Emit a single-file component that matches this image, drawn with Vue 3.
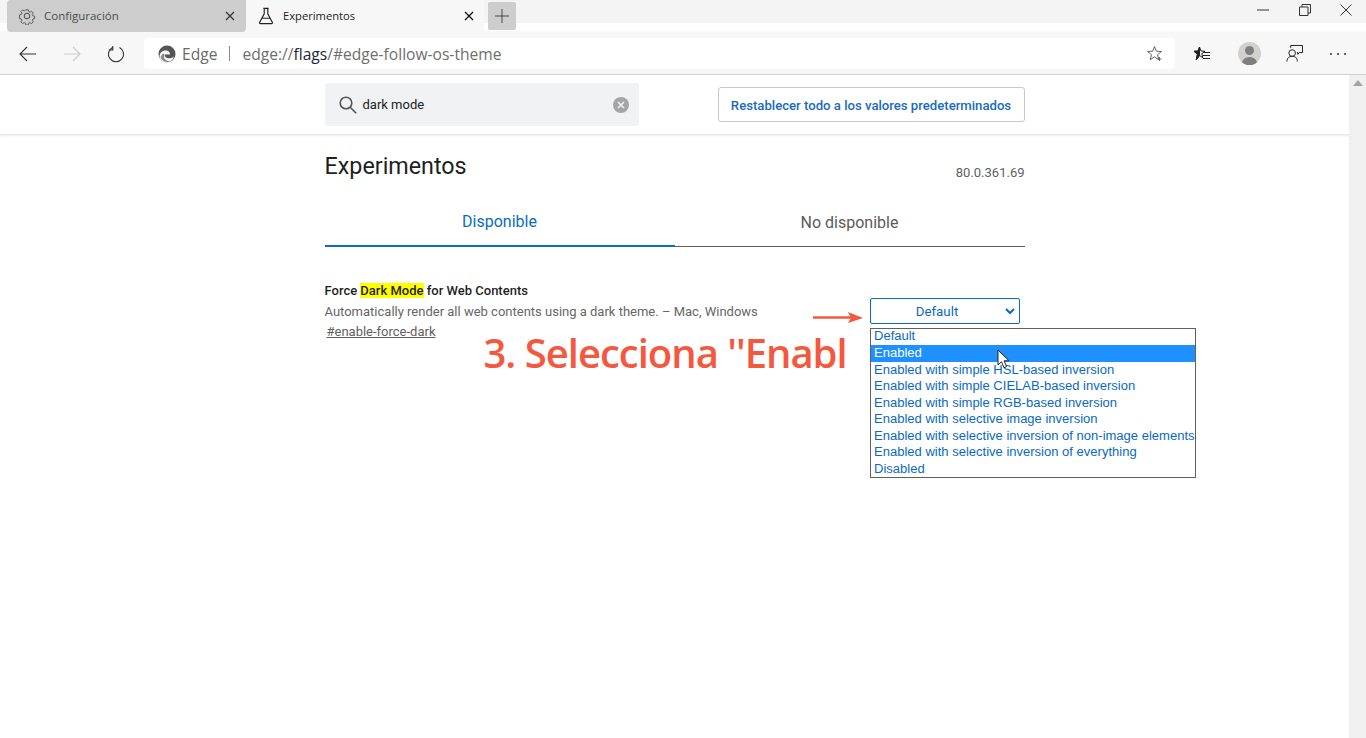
<script setup>
const options = [
  'Default',
  'Enabled',
  'Enabled with simple HSL-based inversion',
  'Enabled with simple CIELAB-based inversion',
  'Enabled with simple RGB-based inversion',
  'Enabled with selective image inversion',
  'Enabled with selective inversion of non-image elements',
  'Enabled with selective inversion of everything',
  'Disabled'
]
</script>

<template>
  <div class="window">
    <div class="tabstrip">
      <div class="tab inactive">
        <svg class="tab-icon" width="18" height="18" viewBox="0 0 18 18" fill="none" stroke="#4a4a4a" stroke-width="1">
          <circle cx="9" cy="9" r="2.8" />
          <path d="M7.6 1.5h2.8l.5 2.2 1.5.7 2-1.1 2 2-1.2 1.9.7 1.5 2.1.5v2.8l-2.1.5-.7 1.5 1.2 1.9-2 2-2-1.1-1.5.7-.5 2.2H7.6l-.5-2.2-1.5-.7-2 1.1-2-2 1.2-1.9-.7-1.5-2.1-.5V7.600l2.100-.5.7-1.500-1.200-1.900 2-2 2 1.100 1.500-.7z" transform="translate(1.500 1.500) scale(.84)" />
        </svg>
        <span class="tab-title">Configuración</span>
        <svg class="tab-close" width="10" height="10" viewBox="0 0 10 10" stroke="#333" stroke-width="1.200"><path d="M1 1l8 8M9 1l-8 8" /></svg>
      </div>
      <div class="tab active">
        <svg class="tab-icon" width="16" height="18" viewBox="0 0 18 20" fill="none" stroke="#222" stroke-width="1.300">
          <path d="M6 1.500h6M7 1.500v6L1.800 17.200q-.4 1.300 1 1.300h12.400q1.400 0 1-1.300L11 7.500v-6M4.500 12.500h9" />
        </svg>
        <span class="tab-title">Experimentos</span>
        <svg class="tab-close" width="10" height="10" viewBox="0 0 10 10" stroke="#111" stroke-width="1.400"><path d="M1 1l8 8M9 1l-8 8" /></svg>
      </div>
      <div class="new-tab">
        <svg width="14" height="14" viewBox="0 0 14 14" stroke="#444" stroke-width="1"><path d="M7 0v14M0 7h14" /></svg>
      </div>
      <div class="win-controls">
        <svg width="12" height="2" viewBox="0 0 12 2" stroke="#333"><path d="M0 1h12" /></svg>
        <svg width="12" height="12" viewBox="0 0 12 12" fill="none" stroke="#333"><path d="M.5 3h8.500v8.500H.5zM3 3V.5h8.500V9H9" /></svg>
        <svg width="12" height="12" viewBox="0 0 12 12" stroke="#333"><path d="M.5.5l11 11M11.500.5l-11 11" /></svg>
      </div>
    </div>

    <div class="toolbar">
      <svg class="nav back" width="18" height="16" viewBox="0 0 18 16" fill="none" stroke="#333" stroke-width="1.100"><path d="M17 8H1M8 1L1 8l7 7" /></svg>
      <svg class="nav fwd" width="18" height="16" viewBox="0 0 18 16" fill="none" stroke="#ccc" stroke-width="1.100"><path d="M1 8h16M10 1l7 7-7 7" /></svg>
      <svg class="nav reload" width="18" height="18" viewBox="0 0 18 18" fill="none" stroke="#333" stroke-width="1.100"><path d="M5.500 2.400A7.600 7.600 0 1 0 12.500 2.400M5.800 1v4H1.800" /></svg>
      <div class="omnibox">
        <svg class="edge-logo" width="18" height="18" viewBox="0 0 18 18">
          <circle cx="9" cy="9" r="8.500" fill="#555" />
          <path d="M1.500 11C2 6.500 6 5 8.500 5.500 11 6 12 7.500 12 9.500H6.500C6.500 12 9 14 13 13c1.200-.3 2-.8 3-1.500-1 3.500-4 6-7.500 6C5.500 17.500 1.500 15 1.500 11z" fill="#f7f7f7" />
          <path d="M6 11.500c0 3 3 5 6.500 4.500-3 2-8.500 1-10-4 1-2.500 2.500-3.500 3.500-3.500z" fill="#8a8a8a" />
        </svg>
        <span class="site">Edge</span>
        <span class="sep"></span>
        <span class="url">edge://<b>flags</b>/#edge-follow-os-theme</span>
        <svg class="star" width="17" height="17" viewBox="0 0 17 17" fill="none" stroke="#666"><path d="M7.500 1.500l1.800 4.700 5.200.3-4 3.200 1.300 5-4.300-2.800-4.300 2.800 1.300-5-4-3.200 5.200-.3z" /><path d="M12.500 12v4M10.500 14h4" /></svg>
      </div>
      <div class="tools">
        <svg width="18" height="16" viewBox="0 0 18 16" fill="none" stroke="#222" stroke-width="1"><path d="M6.500 1v8.500l-3.300 4.500 1.200-5.800L1 5.300l4-.2z" fill="#222" /><path d="M6.500 1l1.500 4 4 .2-3.200 2.500 1 4-3.300-2.200L3.200 14l1.200-5.800L1 5.300l4-.2z" /><path d="M10 6.500h7M10 9.500h7M10 12.500h7" /></svg>
        <div class="avatar"><i class="av-head"></i><i class="av-body"></i></div>
        <svg class="feedback" width="17" height="19" viewBox="0 0 18 20" fill="none" stroke="#222" stroke-width="1.050"><path d="M5 4V1.500h12.500V9H14l-1.500 2V9h-1" /><circle cx="6.500" cy="9.500" r="3.500" /><path d="M1 18.500c0-4 2.500-5.500 5.500-5.500s5.500 1.500 5.500 5.500" /></svg>
        <div class="dots"><i></i><i></i><i></i></div>
      </div>
    </div>

    <div class="page">
      <div class="content">
        <header class="flags-header">
          <div class="column header-row">
            <div class="search">
              <svg width="20" height="20" viewBox="0 0 20 20" fill="none" stroke="#555" stroke-width="1.600"><circle cx="8" cy="8" r="5.800" /><path d="M12.200 12.200l6 6" /></svg>
              <span class="search-text">dark mode</span>
              <span class="clear">
                <svg width="8" height="8" viewBox="0 0 8 8" stroke="#f1f2f4" stroke-width="1.600"><path d="M1 1l6 6M7 1L1 7" /></svg>
              </span>
            </div>
            <button class="reset">Restablecer todo a los valores predeterminados</button>
          </div>
        </header>

        <main class="column body">
          <div class="title-row">
            <h1>Experimentos</h1>
            <span class="version">80.0.361.69</span>
          </div>
          <div class="tabs">
            <div class="page-tab on">Disponible</div>
            <div class="page-tab">No disponible</div>
          </div>

          <div class="experiment">
            <div class="exp-text">
              <div class="exp-name">Force <mark>Dark Mode</mark> for Web Contents</div>
              <div class="exp-desc">Automatically render all web contents using a dark theme. – Mac, Windows</div>
              <a class="exp-link">#enable-force-dark</a>
            </div>
            <div class="select-wrap">
              <div class="select">
                <span>Default</span>
                <svg width="10" height="7" viewBox="0 0 10 7" fill="none" stroke="#0a69c4" stroke-width="2"><path d="M1 1l4 4 4-4" /></svg>
              </div>
              <svg class="arrow" width="52" height="14" viewBox="0 0 52 14"><path d="M0 6.500h38" stroke="#f4583f" stroke-width="2.400" /><path d="M35 1l15 6-15 5 3-5z" fill="#f4583f" /></svg>
              <ul class="popup">
                <li v-for="(o, i) in options" :key="o" :class="{ sel: i === 1 }">{{ o }}</li>
              </ul>
              <svg class="cursor" width="14" height="21" viewBox="0 0 14 21"><path d="M1 1v15l3.500-3.300 2.500 6 2.600-1.100-2.500-5.800H12z" fill="#fff" stroke="#222" stroke-width="1" /></svg>
            </div>
            <div class="annotation">3. Selecciona ''Enabl</div>
          </div>
        </main>
      </div>

      <div class="scrollbar">
        <svg width="10" height="6" viewBox="0 0 10 6"><path d="M5 0l5 6H0z" fill="#a3a3a3" /></svg>
      </div>
    </div>
  </div>
</template>

<style scoped>
.window { width: 1366px; height: 738px; display: flex; flex-direction: column; overflow: hidden; background: #fff; font-family: Roboto, sans-serif; }

.tabstrip { height: 32px; flex: none; display: flex; position: relative; background: linear-gradient(#f4f4f4 0 23px, #fff 23px 31px, #f7f7f7 31px); padding-left: 7px; }
.tab { height: 32px; display: flex; align-items: center; flex: none; box-sizing: border-box; font-family: "Open Sans", sans-serif; font-size: 11.200px; }
.tab.inactive { width: 239px; background: #cdcdcd; color: #4c4c4c; padding: 0 11px; border-radius: 4px 0 4px 4px; font-size: 11.500px; }
.tab.active { width: 238px; background: #f7f7f7; color: #222; padding: 0 10px 0 12px; border-radius: 4px 4px 0 0; }
.tab-icon { flex: none; margin-right: 8px; }
.tab.active .tab-icon { margin-right: 9px; }
.tab-title { flex: 1; margin-top: -2px; }
.new-tab { width: 28px; height: 28px; margin: 2px 0 0 4px; background: #cdcdcd; border-radius: 2px; display: flex; align-items: center; justify-content: center; flex: none; }
.win-controls { position: absolute; right: 14px; top: 4px; width: 95px; height: 12px; display: flex; justify-content: space-between; align-items: center; }

.toolbar { height: 43px; flex: none; box-sizing: border-box; background: #f7f7f7; border-bottom: 1px solid #cfcfcf; display: flex; align-items: center; padding: 1px 0 0 19px; }
.nav { flex: none; }
.back { margin-right: 26px; }
.fwd { margin-right: 26px; }
.reload { margin-right: 19px; }
.omnibox { width: 1031px; height: 31px; background: #fff; border-radius: 4px; display: flex; align-items: center; box-sizing: border-box; padding: 0 11px 0 14px; color: #6e6e6e; font-family: "Open Sans", sans-serif; font-size: 15.600px; flex: none; }
.site { margin-left: 6px; color: #6a6a6a; }
.sep { width: 1px; height: 15px; background: #8a8a8a; margin: 0 12px; }
.url { flex: 1; }
.url b { font-weight: 400; color: #1b2733; }
.tools { flex: 1; display: flex; align-items: center; justify-content: space-between; padding: 0 20px 0 18px; }
.feedback { margin-left: -2px; }
.avatar { width: 23px; height: 23px; border-radius: 50%; background: #d2d0cc; position: relative; overflow: hidden; }
.av-head { position: absolute; left: 7px; top: 4px; width: 9px; height: 9px; border-radius: 50%; background: #7f7f7f; }
.av-body { position: absolute; left: 4px; top: 15px; width: 15px; height: 12px; border-radius: 50%; background: #7f7f7f; }
.dots { display: flex; gap: 5px; }
.dots i { width: 2px; height: 2px; background: #333; border-radius: 50%; }

.page { flex: 1; display: flex; min-height: 0; }
.content { flex: 1; min-width: 0; }
.scrollbar { width: 17px; flex: none; background: #f0f0f0; display: flex; justify-content: center; padding-top: 5px; box-sizing: border-box; }
.scrollbar svg { display: block; }
.column { width: 700px; margin: 0 auto; }

.flags-header { height: 60px; box-sizing: border-box; border-bottom: 1px solid #e8e8e8; box-shadow: 0 1px 2px #e9e9e9; }
.header-row { display: flex; justify-content: space-between; padding-top: 8px; align-items: flex-start; }
.search { width: 314px; height: 43px; background: #f1f2f4; border-radius: 2px; display: flex; align-items: center; box-sizing: border-box; padding: 0 10px 0 13px; }
.search-text { flex: 1; margin-left: 5px; font-size: 13px; color: #222; }
.clear { width: 16px; height: 16px; border-radius: 50%; background: #a5a5a5; display: flex; align-items: center; justify-content: center; }
.reset { width: 307px; height: 35px; margin-top: 4px; background: #fff; border: 1px solid #c8c8c8; border-radius: 3px; color: #1a6ac0; font: 500 13.150px Roboto, sans-serif; padding: 2px 0 0; }

.title-row { display: flex; justify-content: space-between; align-items: flex-start; height: 60px; }
h1 { font-size: 23.300px; font-weight: 400; color: #1f1f1f; margin: 17px 0 0; line-height: 28px; }
.version { font-size: 13px; color: #5f5f5f; margin-top: 30px; line-height: 16px; }
.tabs { display: flex; height: 52px; }
.page-tab { flex: 1; text-align: center; font-size: 16px; color: #5a5a5a; border-bottom: 1px solid #5f5f5f; box-sizing: border-box; padding-top: 19px; line-height: 18px; }
.page-tab.on { color: #0a6cc4; border-bottom: 2px solid #0a6cc4; padding-top: 18px; }

.experiment { position: relative; margin-top: 36px; display: flex; justify-content: space-between; }
.exp-text { font-size: 13px; }
.exp-name { font-weight: 500; color: #1f1f1f; line-height: 16px; }
mark { background: #ff0; color: inherit; }
.exp-desc { color: #666; margin-top: 5px; line-height: 16px; }
.exp-link { display: block; color: #5f5f5f; text-decoration: underline; margin: 4px 0 0 2px; line-height: 16px; }
.select-wrap { position: relative; width: 155px; flex: none; padding-top: 15px; }
.select { width: 150px; height: 26px; box-sizing: border-box; border: 1px solid #0a69c4; border-radius: 2px; display: flex; align-items: center; color: #0a69c4; font-size: 13.300px; position: relative; }
.select span { flex: 1; text-align: center; padding-right: 15px; }
.select svg { position: absolute; right: 4px; top: 9px; }
.arrow { position: absolute; left: -57px; top: 28px; }
.popup { position: absolute; left: 0; top: 45px; width: 326px; height: 150px; margin: 0; padding: 0; box-sizing: border-box; list-style: none; border: 1px solid #606060; background: #fff; z-index: 2; font: 13.020px/16.550px "Liberation Sans", Arial, sans-serif; color: #0a69c4; white-space: nowrap; overflow: hidden; }
.popup li { padding-left: 3.500px; height: 16.550px; position: relative; top: -.6px; }
.popup li.sel { background: #1e90ff; color: #fff; }
.cursor { position: absolute; left: 127px; top: 66px; z-index: 3; }
.annotation { position: absolute; left: 159px; top: 42px; font: 600 40px/56px "Open Sans", sans-serif; letter-spacing: -1px; color: #f4583f; white-space: nowrap; }
</style>

<style>
html, body { margin: 0; background: #fff; overflow: hidden; }
</style>
